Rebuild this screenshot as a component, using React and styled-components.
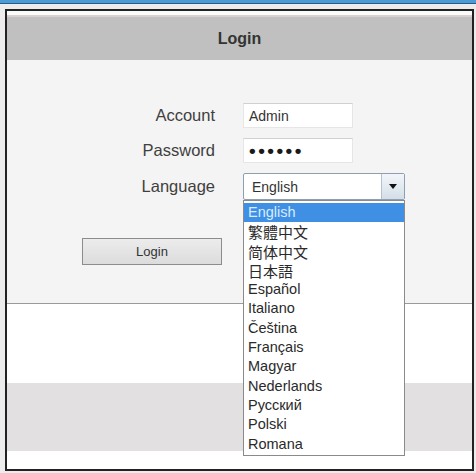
import React, { useState } from 'react';
import styled, { createGlobalStyle } from 'styled-components';

const GlobalStyle = createGlobalStyle`
  html, body {
    margin: 0;
    padding: 0;
    background: #ececec;
  }
  body {
    font-family: "Liberation Sans", Arial, "Noto Sans CJK SC", sans-serif;
    color: #333;
  }
`;

const languages = [
  { label: 'English' },
  { label: '繁體中文', cjk: 'TC' },
  { label: '简体中文', cjk: 'SC' },
  { label: '日本語', cjk: 'JP' },
  { label: 'Español' },
  { label: 'Italiano' },
  { label: 'Čeština' },
  { label: 'Français' },
  { label: 'Magyar' },
  { label: 'Nederlands' },
  { label: 'Русский' },
  { label: 'Polski' },
  { label: 'Romana' },
];

const Page = styled.div`
  width: 476px;
  height: 473px;
  overflow: hidden;
  background: #ececec;
`;

const TopBar = styled.div`
  height: 3px;
  background: #4a9bd6;
  border-bottom: 1px solid #2d5a80;
`;

const Frame = styled.div`
  margin: 5px 2px 0 5px;
  border: 2px solid #222;
  display: flex;
  flex-direction: column;
  background: #fff;
`;

const Strip = styled.div`
  height: 4px;
  background: #fafafa;
  border-bottom: 2px solid #dccfcf;
`;

const Header = styled.div`
  height: 43px;
  background: #c0c0c0;
  display: flex;
  align-items: center;
  justify-content: center;
  font-weight: bold;
  font-size: 16px;
  color: #333;
`;

const Content = styled.div`
  height: 244px;
  background: #f4f4f4;
  border-bottom: 1px solid #9a9a9a;
  padding-top: 43px;
  box-sizing: border-box;
`;

const Form = styled.div`
  display: grid;
  grid-template-columns: 208px 162px;
  column-gap: 28px;
  row-gap: 10px;
  align-items: center;
`;

const Label = styled.div`
  text-align: right;
  font-size: 16.5px;
  color: #404040;
`;

const Field = styled.div`
  height: 25px;
  width: 110px;
  box-sizing: border-box;
  background: #fff;
  border: 1px solid #e6e6e6;
  border-top-color: #d0d0d0;
  display: flex;
  align-items: center;
  padding-left: 5px;
  font-size: 14px;
  color: #333;
`;

const Dots = styled.span`
  font-size: 19px;
  font-weight: bold;
  letter-spacing: 2.5px;
  line-height: 1;
  color: #1a1a1a;
`;

const SelectWrap = styled.div`
  position: relative;
  width: 162px;
`;

const SelectBox = styled.div`
  height: 27px;
  box-sizing: border-box;
  border: 1px solid #8e9fb2;
  border-radius: 2px;
  background: #fff;
  display: flex;
  align-items: stretch;
  font-size: 14px;
  color: #333;
`;

const SelectValue = styled.div`
  flex: 1;
  display: flex;
  align-items: center;
  padding-left: 8px;
`;

const ArrowButton = styled.div`
  width: 22px;
  border-left: 1px solid #b4c2d0;
  background: linear-gradient(#f2f6fa, #d4dee8);
  display: flex;
  align-items: center;
  justify-content: center;
`;

const Arrow = styled.span`
  width: 0;
  height: 0;
  border-left: 4px solid transparent;
  border-right: 4px solid transparent;
  border-top: 5px solid #111;
`;

const List = styled.ul`
  position: absolute;
  top: 100%;
  left: 0;
  width: 100%;
  box-sizing: border-box;
  margin: 0;
  padding: 2px 0 1px;
  list-style: none;
  background: #fff;
  border: 1px solid #8a8a8a;
  z-index: 2;
`;

const Option = styled.li`
  height: 19.3px;
  line-height: 19.3px;
  overflow: hidden;
  padding-left: 4px;
  font-size: ${p => (p.$cjk ? '15px' : '14.5px')};
  font-family: ${p =>
    p.$cjk
      ? `"Noto Sans CJK ${p.$cjk}", sans-serif`
      : '"Liberation Sans", Arial, sans-serif'};
  background: ${p => (p.$active ? '#3f8fe4' : 'transparent')};
  color: ${p => (p.$active ? '#d8ecff' : '#2a2a2a')};
  white-space: nowrap;
`;

const ButtonRow = styled.div`
  padding: 38px 0 0 75px;
`;

const LoginButton = styled.button`
  width: 140px;
  height: 27px;
  border: 1px solid #8c8c8c;
  border-radius: 0;
  background: linear-gradient(#ececec, #dcdcdc);
  font-family: "Liberation Sans", Arial, sans-serif;
  font-size: 13px;
  color: #333;
  padding: 0;
`;

const Blank = styled.div`
  height: ${p => p.$h}px;
  background: ${p => p.$bg || '#fff'};
`;

export default function App() {
  const [lang] = useState('English');

  return (
    <Page>
      <GlobalStyle />
      <TopBar />
      <Frame>
        <Strip />
        <Header>Login</Header>
        <Content>
          <Form>
            <Label>Account</Label>
            <Field>Admin</Field>
            <Label>Password</Label>
            <Field><Dots>••••••</Dots></Field>
            <Label>Language</Label>
            <SelectWrap>
              <SelectBox>
                <SelectValue>{lang}</SelectValue>
                <ArrowButton><Arrow /></ArrowButton>
              </SelectBox>
              <List>
                {languages.map(l => (
                  <Option key={l.label} $cjk={l.cjk} $active={l.label === lang}>
                    {l.label}
                  </Option>
                ))}
              </List>
            </SelectWrap>
          </Form>
          <ButtonRow>
            <LoginButton>Login</LoginButton>
          </ButtonRow>
        </Content>
        <Blank $h={79} />
        <Blank $h={68} $bg="#e2e0e0" />
        <Blank $h={18} />
      </Frame>
    </Page>
  );
}
